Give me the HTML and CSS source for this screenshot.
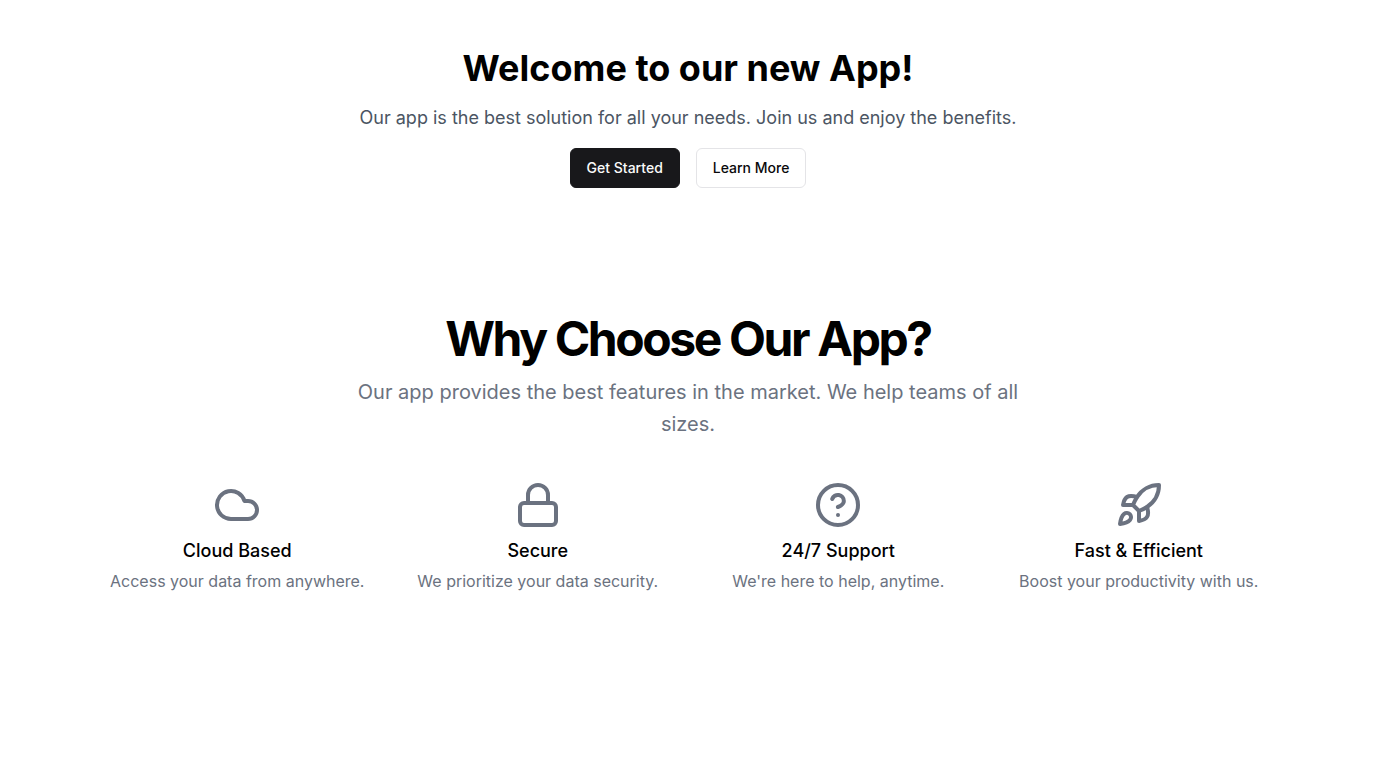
FILE: index.html
```html
<!DOCTYPE html>
<html lang="en">
<head>
<meta charset="utf-8">
<meta name="viewport" content="width=device-width, initial-scale=1">
<title>Welcome to our new App!</title>
<link rel="stylesheet" href="styles.css">
</head>
<body>
<main>
  <section class="hero">
    <h1 class="hero-title">Welcome to our new App!</h1>
    <p class="hero-text">Our app is the best solution for all your needs. Join us and enjoy the benefits.</p>
    <div class="actions">
      <button type="button" class="button button-primary">Get Started</button>
      <button type="button" class="button button-outline">Learn More</button>
    </div>
  </section>
  <section class="features">
    <div class="intro">
      <h2 class="intro-title">Why Choose Our App?</h2>
      <p class="intro-text">Our app provides the best features in the market. We help teams of all sizes.</p>
    </div>
    <div class="feature-grid">
      <article class="feature">
        <svg class="icon" viewBox="0 0 24 24" aria-hidden="true"><path d="M17.5 19H9a7 7 0 1 1 6.71-9h1.79a4.5 4.5 0 1 1 0 9Z"/></svg>
        <h3 class="feature-title">Cloud Based</h3>
        <p class="feature-text">Access your data from anywhere.</p>
      </article>
      <article class="feature">
        <svg class="icon" viewBox="0 0 24 24" aria-hidden="true"><rect width="18" height="11" x="3" y="11" rx="2" ry="2"/><path d="M7 11V7a5 5 0 0 1 10 0v4"/></svg>
        <h3 class="feature-title">Secure</h3>
        <p class="feature-text">We prioritize your data security.</p>
      </article>
      <article class="feature">
        <svg class="icon" viewBox="0 0 24 24" aria-hidden="true"><circle cx="12" cy="12" r="10"/><path d="M9.09 9a3 3 0 0 1 5.83 1c0 2-3 3-3 3"/><path d="M12 17h.01"/></svg>
        <h3 class="feature-title">24/7 Support</h3>
        <p class="feature-text">We're here to help, anytime.</p>
      </article>
      <article class="feature">
        <svg class="icon" viewBox="0 0 24 24" aria-hidden="true"><path d="M4.5 16.5c-1.5 1.26-2 5-2 5s3.74-.5 5-2c.71-.84.7-2.13-.09-2.91a2.18 2.18 0 0 0-2.91-.09z"/><path d="m12 15-3-3a22 22 0 0 1 2-3.95A12.88 12.88 0 0 1 22 2c0 2.72-.78 7.5-6 11a22.35 22.35 0 0 1-4 2z"/><path d="M9 12H4s.55-3.03 2-4c1.62-1.08 5 0 5 0"/><path d="M12 15v5s3.03-.55 4-2c1.08-1.62 0-5 0-5"/></svg>
        <h3 class="feature-title">Fast &amp; Efficient</h3>
        <p class="feature-text">Boost your productivity with us.</p>
      </article>
    </div>
  </section>
</main>
</body>
</html>
```
FILE: styles.css
```css
* {
  box-sizing: border-box;
}

body,
h1,
h2,
h3,
p {
  margin: 0;
}

body {
  background: #fff;
  color: #000;
  font-family: Inter, "Liberation Sans", sans-serif;
  font-size: 16px;
  line-height: 24px;
}

.hero {
  display: flex;
  flex-direction: column;
  align-items: center;
  gap: 16px;
  padding: 48px 24px;
  text-align: center;
}

.hero-title {
  font-size: 36px;
  line-height: 40px;
  font-weight: 700;
}

.hero-text {
  color: #4b5563;
  font-size: 18px;
  line-height: 28px;
}

.actions {
  display: flex;
  gap: 16px;
}

.button {
  height: 40px;
  padding: 8px 16px;
  border: 1px solid #e4e4e7;
  border-radius: 6px;
  background: #fff;
  color: #09090b;
  font-family: inherit;
  font-size: 14px;
  line-height: 20px;
  font-weight: 500;
  cursor: pointer;
}

.button-primary {
  border-color: #18181b;
  background: #18181b;
  color: #fafafa;
}

.features {
  padding: 80px 24px;
}

.intro {
  display: flex;
  flex-direction: column;
  gap: 14px;
  max-width: 700px;
  margin: 0 auto 41px;
  text-align: center;
}

.intro-title {
  font-size: 48px;
  line-height: 46px;
  font-weight: 700;
  letter-spacing: -0.05em;
}

.intro-text {
  color: #6b7280;
  font-size: 20px;
  line-height: 32px;
}

.feature-grid {
  display: grid;
  grid-template-columns: repeat(4, 1fr);
  gap: 32px;
  max-width: 1170px;
  margin: 0 auto;
}

.feature {
  display: flex;
  flex-direction: column;
  align-items: center;
  text-align: center;
}

.icon {
  width: 48px;
  height: 48px;
  margin-bottom: 8px;
  fill: none;
  stroke: #6b7280;
  stroke-width: 2;
  stroke-linecap: round;
  stroke-linejoin: round;
}

.feature-title {
  margin-bottom: 4px;
  font-size: 18px;
  line-height: 28px;
  font-weight: 500;
}

.feature-text {
  color: #6b7280;
}
```
